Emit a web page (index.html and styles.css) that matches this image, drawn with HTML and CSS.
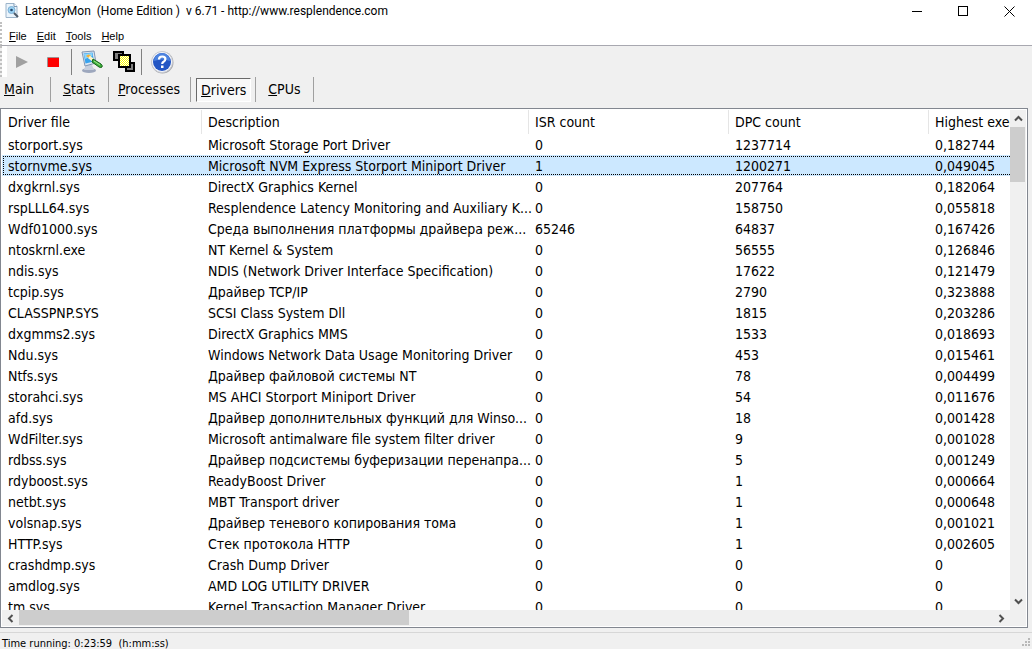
FILE: index.html
```
<!DOCTYPE html>
<html lang="en">
<head>
  <meta charset="UTF-8" />
  <title>LatencyMon</title>
  <link rel="stylesheet" href="styles.css">
</head>
<body>

  <header class="titlebar">
    <svg class="app-icon" width="16" height="16" viewBox="0 0 16 16">
      <path d="M2 .5h8l3 3v11H2z" fill="#eaf4fc" stroke="#9db4ca"/>
      <path d="M10 .5v3h3" fill="#fff" stroke="#7d99b5"/>
      <circle cx="7.5" cy="7" r="3.5" fill="#9cd3f5" stroke="#7fb0d4"/>
      <circle cx="7.5" cy="7" r="1.3" fill="#23476b"/>
      <path d="M10 10l4 4" stroke="#4c5a68" stroke-width="2"/>
    </svg>
    <span class="title">LatencyMon&nbsp; (Home Edition )&nbsp; v 6.71 - http://www.resplendence.com</span>
    <button class="winbtn" aria-label="Minimize"><svg width="11" height="11"><path d="M0 5.500h10" stroke="#000"/></svg></button>
    <button class="winbtn" aria-label="Maximize"><svg width="11" height="11"><rect x=".5" y=".5" width="9" height="9" fill="none" stroke="#000"/></svg></button>
    <button class="winbtn" aria-label="Close"><svg width="11" height="11"><path d="M.5 .5l10 10M10.500 .5l-10 10" stroke="#000"/></svg></button>
  </header>

  <nav class="menubar">
    <button><u>F</u>ile</button>
    <button><u>E</u>dit</button>
    <button><u>T</u>ools</button>
    <button><u>H</u>elp</button>
  </nav>

  <div class="toolbar">
    <button class="tool" aria-label="Start"><svg width="24" height="24"><path d="M6 6v12l12-6z" fill="#a0a0a0"/></svg></button>
    <button class="tool" aria-label="Stop"><svg width="24" height="24"><path d="M5.500 17V7.500H17" fill="none" stroke="#a09090"/><rect x="6" y="8" width="11" height="9" fill="#f00"/></svg></button>
    <span class="sep"></span>
    <button class="tool" aria-label="Options">
      <svg width="24" height="24" viewBox="0 0 24 24">
        <ellipse cx="9" cy="20.500" rx="7" ry="2.500" fill="#9da7bd"/>
        <path d="M6 14l6 1 2 5H4z" fill="#c6cedd"/>
        <path d="M2 2l12-1 2 12-11 3z" fill="#dce6f2" stroke="#8096b3"/>
        <path d="M3.500 3.500l9-1 1.500 9-8.500 2z" fill="#38a3ee"/>
        <path d="M4 4l8-1 .5 3L5 9z" fill="#8ed5fb"/>
        <path d="M6 6q3-3 5 0l-2 2z" fill="#f4b13a"/>
        <path d="M9 7l4 3" stroke="#fff6c8" stroke-width="3"/>
        <path d="M13 9l8 5q2 2 1 3t-3 0l-7-5z" fill="#3eb03c" stroke="#17651b"/>
        <path d="M14 11l6 4" stroke="#a2e58d"/>
      </svg>
    </button>
    <button class="tool" aria-label="Processors">
      <svg width="24" height="24" viewBox="0 0 24 24">
        <rect x="2" y="2" width="9" height="8" fill="#808080" stroke="#000" stroke-width="2"/>
        <rect x="14" y="13" width="8" height="8" fill="#808080" stroke="#000" stroke-width="2"/>
        <rect x="7" y="5" width="11" height="12" fill="#ff0" stroke="#000" stroke-width="2"/>
        <path d="M8 7.500h9M8 9.500h9M8 11.500h9M8 13.500h9M8 15.500h9" stroke="#fff" stroke-dasharray="1 1"/>
        <path d="M9 6.500h8M9 8.500h8M9 10.500h8M9 12.500h8M9 14.500h8" stroke="#fff" stroke-dasharray="1 1"/>
      </svg>
    </button>
    <span class="sep"></span>
    <button class="tool" aria-label="About">
      <svg width="24" height="24" viewBox="0 0 24 24">
        <circle cx="12.500" cy="12.500" r="11" fill="#a9aaad"/>
        <circle cx="12" cy="12" r="10.500" fill="#f4f6fa" stroke="#c7cad2"/>
        <circle cx="12" cy="12" r="9" fill="#2456c4"/>
        <path d="M4 11a8 8 0 0 1 16 0q-8-3-16 0z" fill="#4c83df"/>
        <path d="M9 9.500q0-3 3.200-3t3.200 2.600q0 1.700-1.800 2.600-1.400.8-1.400 2.300" fill="none" stroke="#fff" stroke-width="2.200"/>
        <rect x="11" y="15.500" width="2.500" height="2.500" fill="#fff"/>
      </svg>
    </button>
  </div>

  <nav class="tabs">
    <button class="tab"><u>M</u>ain</button>
    <button class="tab"><u>S</u>tats</button>
    <button class="tab"><u>P</u>rocesses</button>
    <button class="tab active"><span><u>D</u>rivers</span></button>
    <button class="tab"><u>C</u>PUs</button>
  </nav>

  <main class="list">
    <div class="view">
      <table>
        <colgroup>
          <col class="col-file"><col class="col-desc"><col class="col-num"><col class="col-num"><col class="col-num">
        </colgroup>
        <thead>
          <tr><th>Driver file</th><th>Description</th><th>ISR count</th><th>DPC count</th><th>Highest execution (ms)</th></tr>
        </thead>
        <tbody>
          <tr><td>storport.sys</td><td>Microsoft Storage Port Driver</td><td>0</td><td>1237714</td><td>0,182744</td></tr>
          <tr class="selected"><td>stornvme.sys</td><td>Microsoft NVM Express Storport Miniport Driver</td><td>1</td><td>1200271</td><td>0,049045</td></tr>
          <tr><td>dxgkrnl.sys</td><td>DirectX Graphics Kernel</td><td>0</td><td>207764</td><td>0,182064</td></tr>
          <tr><td>rspLLL64.sys</td><td>Resplendence Latency Monitoring and Auxiliary K...</td><td>0</td><td>158750</td><td>0,055818</td></tr>
          <tr><td>Wdf01000.sys</td><td>Среда выполнения платформы драйвера реж...</td><td>65246</td><td>64837</td><td>0,167426</td></tr>
          <tr><td>ntoskrnl.exe</td><td>NT Kernel &amp; System</td><td>0</td><td>56555</td><td>0,126846</td></tr>
          <tr><td>ndis.sys</td><td>NDIS (Network Driver Interface Specification)</td><td>0</td><td>17622</td><td>0,121479</td></tr>
          <tr><td>tcpip.sys</td><td>Драйвер TCP/IP</td><td>0</td><td>2790</td><td>0,323888</td></tr>
          <tr><td>CLASSPNP.SYS</td><td>SCSI Class System Dll</td><td>0</td><td>1815</td><td>0,203286</td></tr>
          <tr><td>dxgmms2.sys</td><td>DirectX Graphics MMS</td><td>0</td><td>1533</td><td>0,018693</td></tr>
          <tr><td>Ndu.sys</td><td>Windows Network Data Usage Monitoring Driver</td><td>0</td><td>453</td><td>0,015461</td></tr>
          <tr><td>Ntfs.sys</td><td>Драйвер файловой системы NT</td><td>0</td><td>78</td><td>0,004499</td></tr>
          <tr><td>storahci.sys</td><td>MS AHCI Storport Miniport Driver</td><td>0</td><td>54</td><td>0,011676</td></tr>
          <tr><td>afd.sys</td><td>Драйвер дополнительных функций для Winso...</td><td>0</td><td>18</td><td>0,001428</td></tr>
          <tr><td>WdFilter.sys</td><td>Microsoft antimalware file system filter driver</td><td>0</td><td>9</td><td>0,001028</td></tr>
          <tr><td>rdbss.sys</td><td>Драйвер подсистемы буферизации перенапра...</td><td>0</td><td>5</td><td>0,001249</td></tr>
          <tr><td>rdyboost.sys</td><td>ReadyBoost Driver</td><td>0</td><td>1</td><td>0,000664</td></tr>
          <tr><td>netbt.sys</td><td>MBT Transport driver</td><td>0</td><td>1</td><td>0,000648</td></tr>
          <tr><td>volsnap.sys</td><td>Драйвер теневого копирования тома</td><td>0</td><td>1</td><td>0,001021</td></tr>
          <tr><td>HTTP.sys</td><td>Стек протокола HTTP</td><td>0</td><td>1</td><td>0,002605</td></tr>
          <tr><td>crashdmp.sys</td><td>Crash Dump Driver</td><td>0</td><td>0</td><td>0</td></tr>
          <tr><td>amdlog.sys</td><td>AMD LOG UTILITY DRIVER</td><td>0</td><td>0</td><td>0</td></tr>
          <tr><td>tm.sys</td><td>Kernel Transaction Manager Driver</td><td>0</td><td>0</td><td>0</td></tr>
        </tbody>
      </table>
    </div>
    <div class="scroll vertical">
      <button aria-label="Scroll up"><svg width="9" height="9"><path d="M1 6.500l3.500-3.500 3.500 3.500" fill="none" stroke="#505050" stroke-width="2"/></svg></button>
      <div class="track"><div class="thumb"></div></div>
      <button aria-label="Scroll down"><svg width="9" height="9"><path d="M1 2.500l3.500 3.500 3.500-3.500" fill="none" stroke="#505050" stroke-width="2"/></svg></button>
    </div>
    <div class="scroll horizontal">
      <button aria-label="Scroll left"><svg width="9" height="9"><path d="M6.500 1l-3.500 3.500 3.500 3.500" fill="none" stroke="#505050" stroke-width="2"/></svg></button>
      <div class="track"><div class="thumb"></div></div>
      <button aria-label="Scroll right"><svg width="9" height="9"><path d="M2.500 1l3.500 3.500-3.500 3.500" fill="none" stroke="#505050" stroke-width="2"/></svg></button>
    </div>
    <div class="corner"></div>
  </main>

  <footer class="statusbar">
    <span>Time running: 0:23:59&nbsp; (h:mm:ss)</span>
    <svg width="10" height="10" fill="#b8b8b8"><path d="M6 0h2v2h-2zM3 3h2v2h-2zM6 3h2v2h-2zM0 6h2v2h-2zM3 6h2v2h-2zM6 6h2v2h-2z"/></svg>
  </footer>

</body>
</html>
```
FILE: styles.css
```
* {
  box-sizing: border-box;
}
body {
  margin: 0;
  height: 100vh;
  display: flex;
  flex-direction: column;
  overflow: hidden;
  background: #f0f0f0;
  color: #000;
  font-family: "DejaVu Sans Condensed", "DejaVu Sans", sans-serif;
  font-size: 14px;
}
button {
  border: none;
  padding: 0;
  background: none;
  color: inherit;
  font: inherit;
}
svg {
  display: block;
}

/* title bar */
.titlebar {
  display: flex;
  align-items: center;
  height: 22px;
  padding-left: 4px;
  background: #fff;
  font-family: Roboto, sans-serif;
  font-size: 12px;
}
.title {
  flex: 1;
  margin-left: 5px;
  white-space: nowrap;
}
.winbtn {
  display: flex;
  justify-content: center;
  align-items: center;
  width: 46px;
  height: 20px;
}

/* menu */
.menubar {
  display: flex;
  align-items: center;
  gap: 10px;
  height: 24px;
  padding: 4px 0 0 7px;
  background: #fff;
  border-bottom: 1px solid #a8a8b0;
  font-family: "Liberation Sans", Arial, sans-serif;
  font-size: 11px;
}

/* toolbar */
.toolbar {
  display: flex;
  align-items: center;
  height: 31px;
  padding-left: 4px;
  background: linear-gradient(#fff, #fff) no-repeat 0 0 / 5px 100%;
}
.menubar, .toolbar {
  border-left: 2px dotted #c0c0c0;
}
.tool {
  width: 32px;
  height: 28px;
  display: flex;
  justify-content: center;
  align-items: center;
}
.sep {
  width: 1px;
  height: 26px;
  margin: 0 4px 0 1px;
  background: #808080;
}

/* tabs */
.tabs {
  display: flex;
  height: 25px;
}
.tab {
  min-width: 58px;
  padding: 0 10px 2px 9px;
  border-right: 1px solid #a0a0a0;
}
.tab:first-child {
  min-width: 51px;
  padding-left: 4px;
  text-align: left;
}
.tab.active {
  padding: 0 4px 0 5px;
}
.tab.active span {
  display: block;
  padding: 0 4px;
  line-height: 22px;
  background: #f8f8f8;
  border: 1px solid #fff;
  border-top-color: #696969;
  border-left-color: #696969;
}

/* driver list */
.list {
  flex: 1;
  min-height: 0;
  display: grid;
  grid-template-columns: 1fr 16px;
  grid-template-rows: 1fr 16px;
  margin: 6px 4px 4px 0;
  padding: 1px;
  background: #fff;
  border: 1px solid #828790;
}
.view {
  min-width: 0;
  min-height: 0;
  overflow: hidden;
}
table {
  width: 1127px;
  table-layout: fixed;
  border-spacing: 0;
}
.col-file, .col-num {
  width: 200px;
}
.col-desc {
  width: 327px;
}
th, td {
  height: 21px;
  padding: 0 0 0 6px;
  line-height: 20px;
  text-align: left;
  font-weight: normal;
  white-space: nowrap;
}
th {
  height: 24px;
  border-right: 1px solid #e5e5e5;
}
.selected {
  background: #cce8ff;
  outline: 1px dotted #000;
  outline-offset: -2px;
}

/* scrollbars */
.scroll {
  display: flex;
}
.scroll, .corner {
  background: #f0f0f0;
}
.scroll button {
  width: 16px;
  height: 17px;
  display: flex;
  justify-content: center;
  align-items: center;
}
.horizontal button {
  width: 17px;
  height: 16px;
}
.vertical {
  flex-direction: column;
}
.track {
  flex: 1;
}
.thumb {
  background: #cdcdcd;
}
.vertical .thumb {
  width: 15px;
  height: 55px;
}
.horizontal .thumb {
  width: 40%;
  height: 15px;
}

/* status bar */
.statusbar {
  display: flex;
  justify-content: space-between;
  align-items: center;
  height: 17px;
  padding: 4px 0 0 2px;
  border-top: 1px solid #d7d7d7;
  font-size: 11px;
}
```
